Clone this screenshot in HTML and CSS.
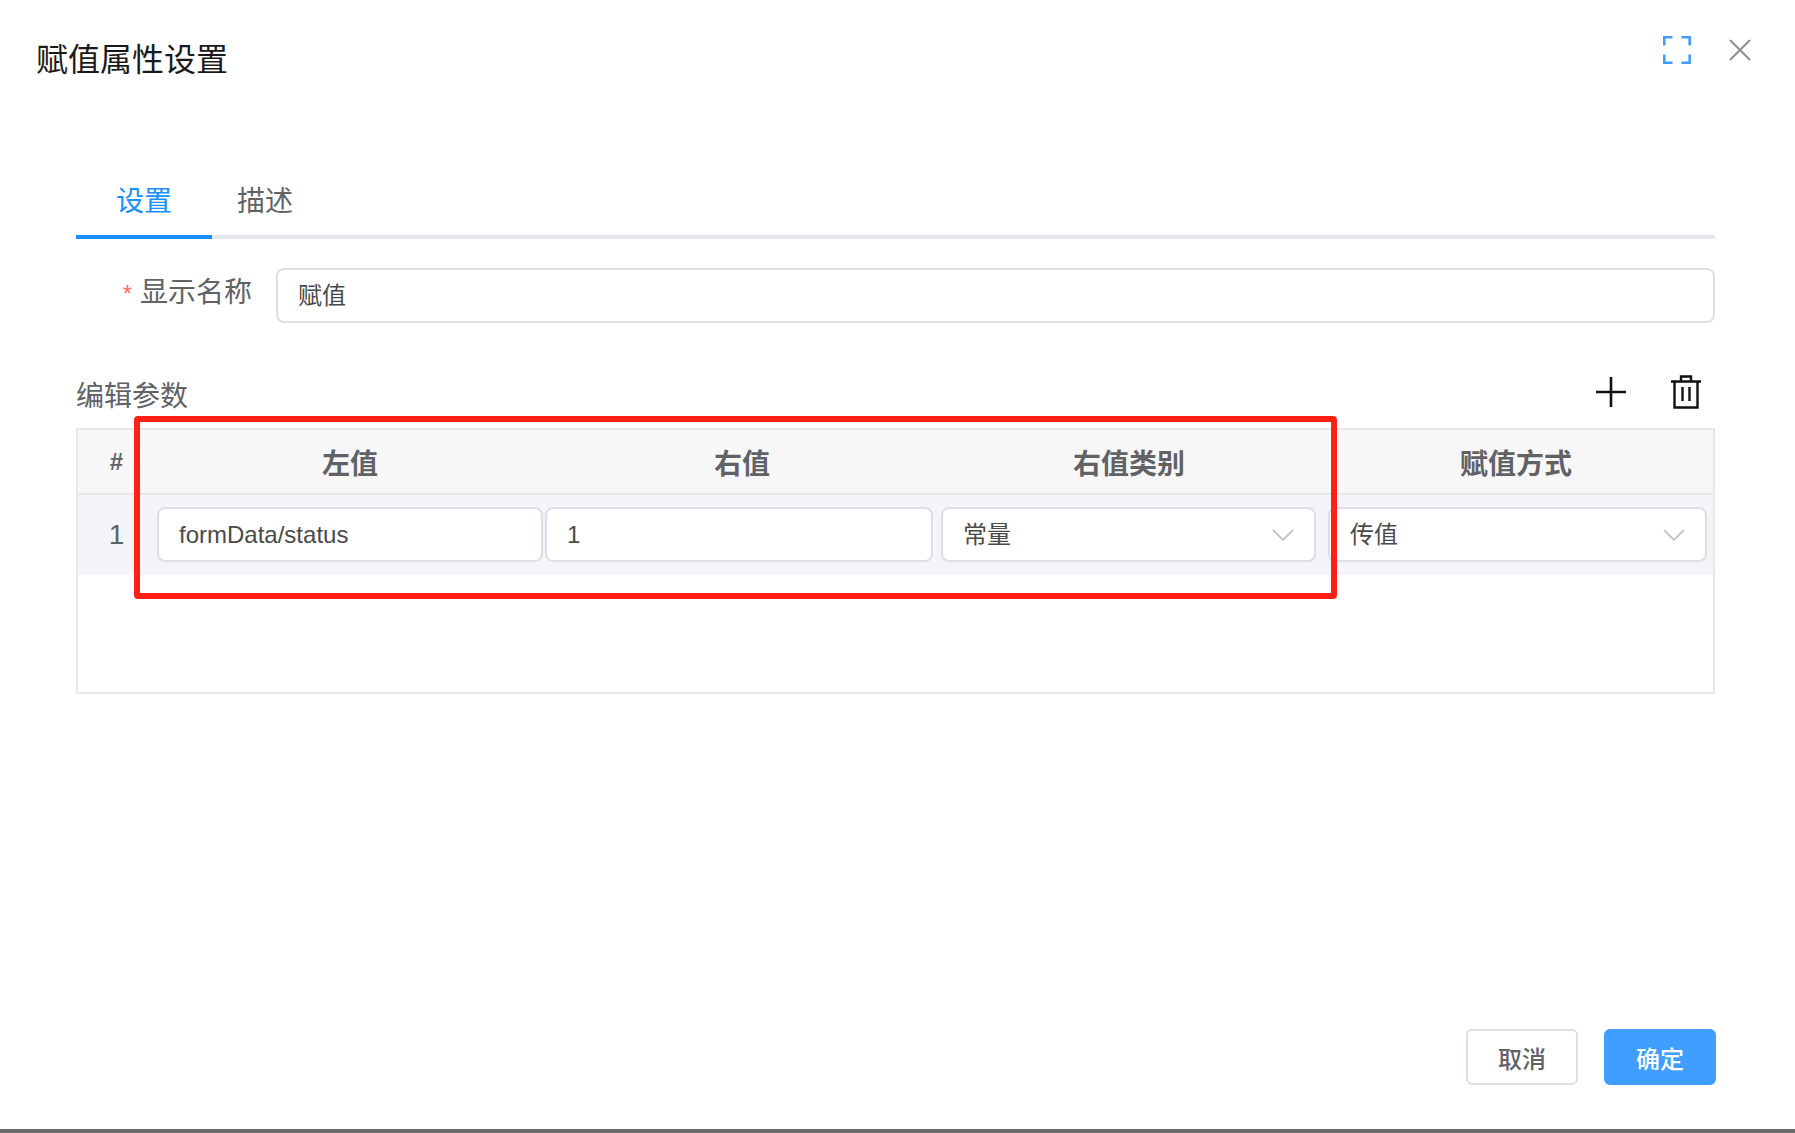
FILE: index.html
```html
<!DOCTYPE html>
<html lang="zh-CN">
<head>
  <meta charset="UTF-8" />
  <title>赋值属性设置</title>
  <link rel="stylesheet" href="styles.css">
</head>
<body>
  <div class="dialog">
    <div class="dialog-header">
      <span class="dialog-title">赋值属性设置</span>
      <div class="dialog-tools">
        <svg class="icon-full" width="28" height="28" viewBox="0 0 28 28" fill="none" stroke="#409eff" stroke-width="2.6">
          <path d="M1.3 9.5V1.3H9.5M18.5 1.3H26.7V9.5M26.7 18.5V26.7H18.5M9.5 26.7H1.3V18.5"/>
        </svg>
        <svg class="icon-close" width="22" height="22" viewBox="0 0 22 22" fill="none" stroke="#909399" stroke-width="2.2">
          <path d="M1 1L21 21M21 1L1 21"/>
        </svg>
      </div>
    </div>

    <div class="tabs">
      <div class="tab active">设置</div>
      <div class="tab">描述</div>
    </div>

    <div class="form-row">
      <label class="form-label"><span class="req">*</span>显示名称</label>
      <div class="input grow">赋值</div>
    </div>

    <div class="param-head">
      <span class="param-title">编辑参数</span>
      <div class="param-tools">
        <svg width="32" height="32" viewBox="0 0 32 32" fill="none" stroke="#111" stroke-width="2.6">
          <path d="M1 16H31M16 1V31"/>
        </svg>
        <svg width="32" height="34" viewBox="0 0 32 34" fill="none" stroke="#111" stroke-width="2.4">
          <path d="M1 6.5H31M11 6.5V1.5H21V6.5M4.5 6.5V32.5H27.5V6.5M12.5 12V26M19.5 12V26"/>
        </svg>
      </div>
    </div>

    <div class="table">
      <div class="table-row table-header">
        <div class="cell index">#</div>
        <div class="cell">左值</div>
        <div class="cell">右值</div>
        <div class="cell">右值类别</div>
        <div class="cell">赋值方式</div>
      </div>
      <div class="table-row table-body">
        <div class="cell index">1</div>
        <div class="cell c-left"><div class="input">formData/status</div></div>
        <div class="cell c-right"><div class="input">1</div></div>
        <div class="cell c-type">
          <div class="input select">常量
            <svg width="22" height="12" viewBox="0 0 22 12" fill="none" stroke="#c0c4cc" stroke-width="1.8"><path d="M1 1L11 11L21 1"/></svg>
          </div>
        </div>
        <div class="cell c-mode">
          <div class="input select">传值
            <svg width="22" height="12" viewBox="0 0 22 12" fill="none" stroke="#c0c4cc" stroke-width="1.8"><path d="M1 1L11 11L21 1"/></svg>
          </div>
        </div>
      </div>
      <div class="mark"></div>
    </div>

    <div class="dialog-footer">
      <button class="btn">取消</button>
      <button class="btn primary">确定</button>
    </div>
  </div>
  <div class="taskbar"></div>
</body>
</html>
```

FILE: styles.css
```css
* { box-sizing: border-box; }
body {
  margin: 0;
  height: 1133px;
  overflow: hidden;
  display: flex;
  flex-direction: column;
  background: #fff;
  color: #606266;
  font-family: "Liberation Sans", "Noto Sans CJK SC", sans-serif;
}
.dialog {
  flex: 1;
  display: flex;
  flex-direction: column;
}
.dialog-header {
  height: 114px;
  padding-left: 36px;
  padding-right: 44px;
  display: flex;
  justify-content: space-between;
  align-items: center;
}
.dialog-title {
  font-size: 32px;
  color: #1a1a1a;
}
.dialog-tools {
  display: flex;
  align-items: center;
  gap: 38px;
  margin-bottom: 14px;
}
.tabs {
  display: flex;
  margin: 60px 80px 0 76px;
  border-bottom: 4px solid #e4e7ed;
}
.tab {
  height: 61px;
  width: 136px;
  margin-bottom: -4px;
  margin-right: 80px;
  font-size: 28px;
  line-height: 56px;
  text-align: center;
  height: 65px;
  padding-top: 0;
}
.tab + .tab {
  width: auto;
  margin-left: -95px;
  padding: 0 40px;
}
.tab.active {
  color: #1890ff;
  border-bottom: 4px solid #1890ff;
}
.form-row {
  display: flex;
  margin: 29px 80px 0 76px;
  height: 55px;
}
.form-label {
  width: 200px;
  padding-right: 24px;
  text-align: right;
  font-size: 28px;
  line-height: 50px;
}
.req {
  color: #f56c6c;
  font-size: 24px;
  margin-right: 8px;
}
.input {
  height: 55px;
  padding: 0 20px;
  background: #fff;
  border: 2px solid #dcdfe6;
  border-radius: 8px;
  font-size: 24px;
  line-height: 51px;
  color: #4a4a4a;
}
.grow { flex: 1; }
.select {
  display: flex;
  justify-content: space-between;
  align-items: center;
}
.param-head {
  display: flex;
  justify-content: space-between;
  align-items: center;
  height: 54px;
  margin: 44px 80px 7px 76px;
}
.param-title { font-size: 28px; }
.param-tools {
  display: flex;
  align-items: center;
  gap: 43px;
  padding-right: 13px;
  margin-top: -4px;
}
.table {
  position: relative;
  height: 266px;
  margin: 0 80px 0 76px;
  border: 2px solid #e8e8e8;
}
.table-row {
  display: grid;
  grid-template-columns: 77px 390px 394px 380px 394px;
}
.table-header {
  height: 65px;
  background: #f7f7f7;
  border-bottom: 2px solid #e8e8e8;
}
.table-header .cell {
  font-size: 28px;
  font-weight: 700;
}
.table-body {
  height: 80px;
  background: #f4f5f9;
}
.cell {
  display: flex;
  align-items: center;
  justify-content: center;
}
.table-body .input { width: 100%; }
.table-header .index { font-size: 24px; }
.table-body .index { font-size: 28px; }
.c-left { padding: 0 2px 1px; }
.c-right { padding: 0 6px 1px 0; }
.c-type { padding: 0 3px 1px 2px; }
.c-mode { padding: 0 6px 1px 9px; }
.select svg { margin-right: 0; }
.mark {
  position: absolute;
  left: 56px;
  top: -14px;
  width: 1203px;
  height: 183px;
  border: 6px solid #ff2015;
  border-radius: 4px;
}
.dialog-footer {
  margin-top: auto;
  display: flex;
  justify-content: flex-end;
  gap: 26px;
  padding: 0 79px 44px 0;
}
.btn {
  width: 112px;
  height: 56px;
  padding: 0;
  border: 2px solid #dcdfe6;
  border-radius: 6px;
  background: #fff;
  color: #606266;
  font-family: inherit;
  font-size: 24px;
  font-weight: 500;
}
.btn.primary {
  background: #409eff;
  border-color: #409eff;
  color: #fff;
}
.taskbar {
  height: 4px;
  background: #6b6b6b;
}
```
